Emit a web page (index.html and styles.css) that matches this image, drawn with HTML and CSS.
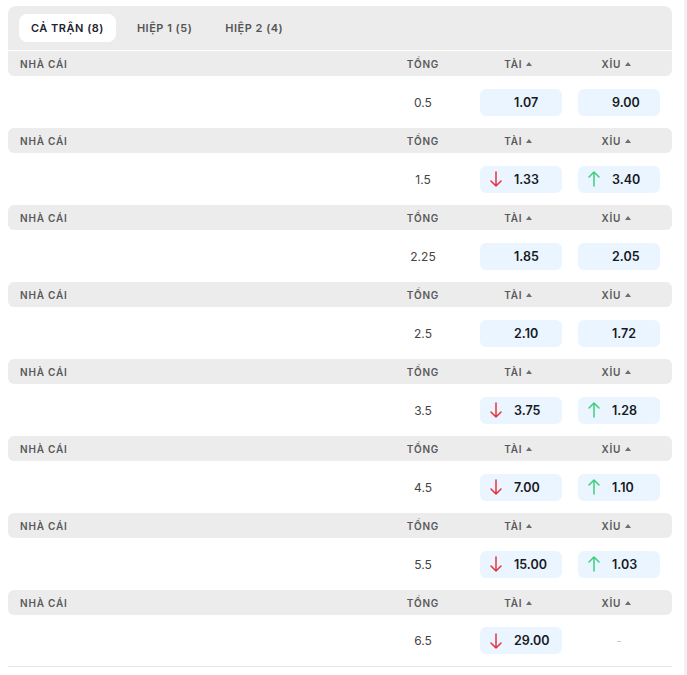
FILE: index.html
```html
<!DOCTYPE html>
<html lang="vi">
<head>
<meta charset="utf-8">
<title>Tài Xỉu</title>
<link rel="stylesheet" href="styles.css">
</head>
<body>
<div class="page">
  <div class="content">
    <div class="tabs">
      <div class="tab active">CẢ TRẬN (8)</div>
      <div class="tab">HIỆP 1 (5)</div>
      <div class="tab">HIỆP 2 (4)</div>
    </div>

    <div class="market">
      <div class="head first"><span class="c-book">NHÀ CÁI</span><span class="c">TỔNG</span><span class="c">TÀI <i class="sort"></i></span><span class="c">XỈU <i class="sort"></i></span></div>
      <div class="row"><span></span><span class="total">0.5</span>
        <span class="odd"><i class="arr"></i><b>1.07</b></span>
        <span class="odd"><i class="arr"></i><b>9.00</b></span></div>
    </div>

    <div class="market">
      <div class="head"><span class="c-book">NHÀ CÁI</span><span class="c">TỔNG</span><span class="c">TÀI <i class="sort"></i></span><span class="c">XỈU <i class="sort"></i></span></div>
      <div class="row"><span></span><span class="total">1.5</span>
        <span class="odd"><svg class="arr down" viewBox="0 0 12 16"><path d="M6 1V15M1 10L6 15L11 10"/></svg><b>1.33</b></span>
        <span class="odd"><svg class="arr up" viewBox="0 0 12 16"><path d="M6 15V1M1 6L6 1L11 6"/></svg><b>3.40</b></span></div>
    </div>

    <div class="market">
      <div class="head"><span class="c-book">NHÀ CÁI</span><span class="c">TỔNG</span><span class="c">TÀI <i class="sort"></i></span><span class="c">XỈU <i class="sort"></i></span></div>
      <div class="row"><span></span><span class="total">2.25</span>
        <span class="odd"><i class="arr"></i><b>1.85</b></span>
        <span class="odd"><i class="arr"></i><b>2.05</b></span></div>
    </div>

    <div class="market">
      <div class="head"><span class="c-book">NHÀ CÁI</span><span class="c">TỔNG</span><span class="c">TÀI <i class="sort"></i></span><span class="c">XỈU <i class="sort"></i></span></div>
      <div class="row"><span></span><span class="total">2.5</span>
        <span class="odd"><i class="arr"></i><b>2.10</b></span>
        <span class="odd"><i class="arr"></i><b>1.72</b></span></div>
    </div>

    <div class="market">
      <div class="head"><span class="c-book">NHÀ CÁI</span><span class="c">TỔNG</span><span class="c">TÀI <i class="sort"></i></span><span class="c">XỈU <i class="sort"></i></span></div>
      <div class="row"><span></span><span class="total">3.5</span>
        <span class="odd"><svg class="arr down" viewBox="0 0 12 16"><path d="M6 1V15M1 10L6 15L11 10"/></svg><b>3.75</b></span>
        <span class="odd"><svg class="arr up" viewBox="0 0 12 16"><path d="M6 15V1M1 6L6 1L11 6"/></svg><b>1.28</b></span></div>
    </div>

    <div class="market">
      <div class="head"><span class="c-book">NHÀ CÁI</span><span class="c">TỔNG</span><span class="c">TÀI <i class="sort"></i></span><span class="c">XỈU <i class="sort"></i></span></div>
      <div class="row"><span></span><span class="total">4.5</span>
        <span class="odd"><svg class="arr down" viewBox="0 0 12 16"><path d="M6 1V15M1 10L6 15L11 10"/></svg><b>7.00</b></span>
        <span class="odd"><svg class="arr up" viewBox="0 0 12 16"><path d="M6 15V1M1 6L6 1L11 6"/></svg><b>1.10</b></span></div>
    </div>

    <div class="market">
      <div class="head"><span class="c-book">NHÀ CÁI</span><span class="c">TỔNG</span><span class="c">TÀI <i class="sort"></i></span><span class="c">XỈU <i class="sort"></i></span></div>
      <div class="row"><span></span><span class="total">5.5</span>
        <span class="odd"><svg class="arr down" viewBox="0 0 12 16"><path d="M6 1V15M1 10L6 15L11 10"/></svg><b>15.00</b></span>
        <span class="odd"><svg class="arr up" viewBox="0 0 12 16"><path d="M6 15V1M1 6L6 1L11 6"/></svg><b>1.03</b></span></div>
    </div>

    <div class="market last">
      <div class="head"><span class="c-book">NHÀ CÁI</span><span class="c">TỔNG</span><span class="c">TÀI <i class="sort"></i></span><span class="c">XỈU <i class="sort"></i></span></div>
      <div class="row"><span></span><span class="total">6.5</span>
        <span class="odd"><svg class="arr down" viewBox="0 0 12 16"><path d="M6 1V15M1 10L6 15L11 10"/></svg><b>29.00</b></span>
        <span class="none">-</span></div>
    </div>
  </div>
  <div class="track"></div>
</div>
</body>
</html>
```

FILE: styles.css
```css
* { box-sizing: border-box; }
html, body { margin: 0; padding: 0; background: #fff; }
body { font-family: Inter, "Noto Sans", "Liberation Sans", sans-serif; color: #222; }

.page { display: flex; min-height: 675px; }
.content { flex: 1; padding: 6px 12px 0 8px; }
.track { width: 3px; background: #f1f1f1; }

.tabs {
  display: flex;
  align-items: center;
  gap: 9px;
  height: 45px;
  padding: 0 11px;
  background: #ececec;
  border-radius: 8px 8px 0 0;
  border-bottom: 1px solid #fff;
}
.tab {
  height: 28px;
  display: flex;
  align-items: center;
  padding: 0 12px;
  border-radius: 8px;
  font-size: 11px;
  font-weight: 600;
  letter-spacing: 0.5px;
  color: #555;
}
.tab.active { background: #fff; color: #1f2430; }

.head, .row {
  display: grid;
  grid-template-columns: 1fr 82px 82px 82px;
  column-gap: 16px;
  padding: 0 12px;
  align-items: center;
}
.head {
  height: 25px;
  background: #ececec;
  border-radius: 6px;
  font-size: 10px;
  font-weight: 600;
  letter-spacing: 0.8px;
  color: #595959;
}
.head.first { border-radius: 0 0 6px 6px; }
.head .c { text-align: center; }
.sort {
  display: inline-block;
  width: 12px;
  height: 8px;
  position: relative;
  vertical-align: 0;
}
.sort::before {
  content: "";
  position: absolute;
  left: 0;
  top: 2px;
  border-left: 3px solid transparent;
  border-right: 3px solid transparent;
  border-bottom: 4px solid #6e6e6e;
}

.row { height: 52px; }
.market.last .row { border-bottom: 1px solid #e6e6e6; }
.total { text-align: center; font-size: 12px; color: #444; }
.odd {
  display: flex;
  align-items: center;
  height: 27px;
  padding: 0 6px 0 10px;
  background: #ebf5ff;
  border-radius: 6px;
}
.odd b {
  margin-left: 12px;
  font-size: 12.5px;
  font-weight: 600;
  color: #171a22;
}
.arr { display: block; width: 12px; height: 16px; flex: none; }
svg.arr { fill: none; stroke-width: 1.5; stroke-linecap: round; stroke-linejoin: round; }
svg.arr.down { stroke: #e53340; }
svg.arr.up { stroke: #3dd07c; }
.none { text-align: center; color: #c4c4c4; font-size: 11px; }
```
